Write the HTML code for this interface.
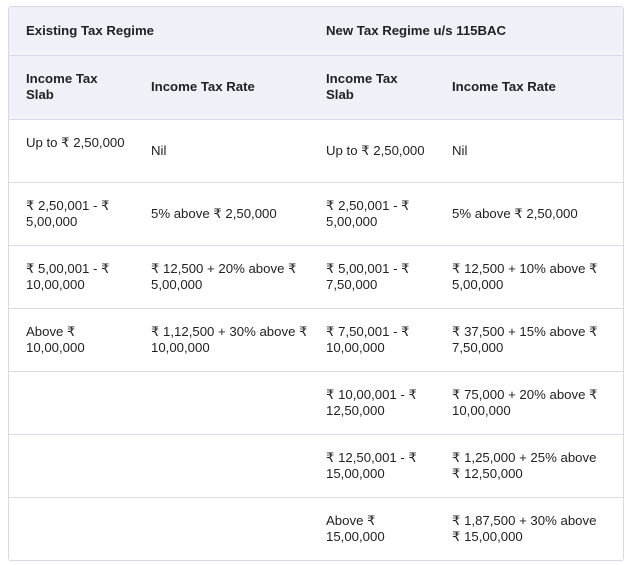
<!DOCTYPE html>
<html><head><style>
body{margin:0;background:#fff;font-family:"Liberation Sans",Arial,sans-serif;color:#222;}
.wrap{position:absolute;left:8px;top:6px;width:614px;height:553px;border:1px solid #d9d9e6;border-radius:3px;overflow:hidden;}
table{border-collapse:collapse;width:614px;table-layout:fixed;font-size:13.2px;line-height:16px;}
td{padding:0 0 0 17px;vertical-align:middle;border-bottom:1px solid #d9d9ea;white-space:nowrap;overflow:visible;}
tr.h td{background:#eff0f8;font-weight:bold;color:#222;}
tr:last-child td{border-bottom:none;}
</style></head><body>
<div class="wrap"><table>
<colgroup><col style="width:125px"><col style="width:175px"><col style="width:126px"><col style="width:188px"></colgroup>
<tr class="h" style="height:48px"><td colspan="2">Existing Tax Regime</td><td colspan="2">New Tax Regime u/s 115BAC</td></tr>
<tr class="h" style="height:64px"><td>Income Tax<br>Slab</td><td>Income Tax Rate</td><td>Income Tax<br>Slab</td><td>Income Tax Rate</td></tr>
<tr style="height:63px"><td style="padding-bottom:16px">Up to ₹ 2,50,000</td><td>Nil</td><td>Up to ₹ 2,50,000</td><td>Nil</td></tr>
<tr style="height:63px"><td>₹ 2,50,001 - ₹<br>5,00,000</td><td>5% above ₹ 2,50,000</td><td>₹ 2,50,001 - ₹<br>5,00,000</td><td>5% above ₹ 2,50,000</td></tr>
<tr style="height:63px"><td>₹ 5,00,001 - ₹<br>10,00,000</td><td>₹ 12,500 + 20% above ₹<br>5,00,000</td><td>₹ 5,00,001 - ₹<br>7,50,000</td><td>₹ 12,500 + 10% above ₹<br>5,00,000</td></tr>
<tr style="height:63px"><td>Above ₹<br>10,00,000</td><td>₹ 1,12,500 + 30% above ₹<br>10,00,000</td><td>₹ 7,50,001 - ₹<br>10,00,000</td><td>₹ 37,500 + 15% above ₹<br>7,50,000</td></tr>
<tr style="height:63px"><td></td><td></td><td>₹ 10,00,001 - ₹<br>12,50,000</td><td>₹ 75,000 + 20% above ₹<br>10,00,000</td></tr>
<tr style="height:63px"><td></td><td></td><td>₹ 12,50,001 - ₹<br>15,00,000</td><td>₹ 1,25,000 + 25% above<br>₹ 12,50,000</td></tr>
<tr style="height:63px"><td></td><td></td><td>Above ₹<br>15,00,000</td><td>₹ 1,87,500 + 30% above<br>₹ 15,00,000</td></tr>
</table></div>
</body></html>
